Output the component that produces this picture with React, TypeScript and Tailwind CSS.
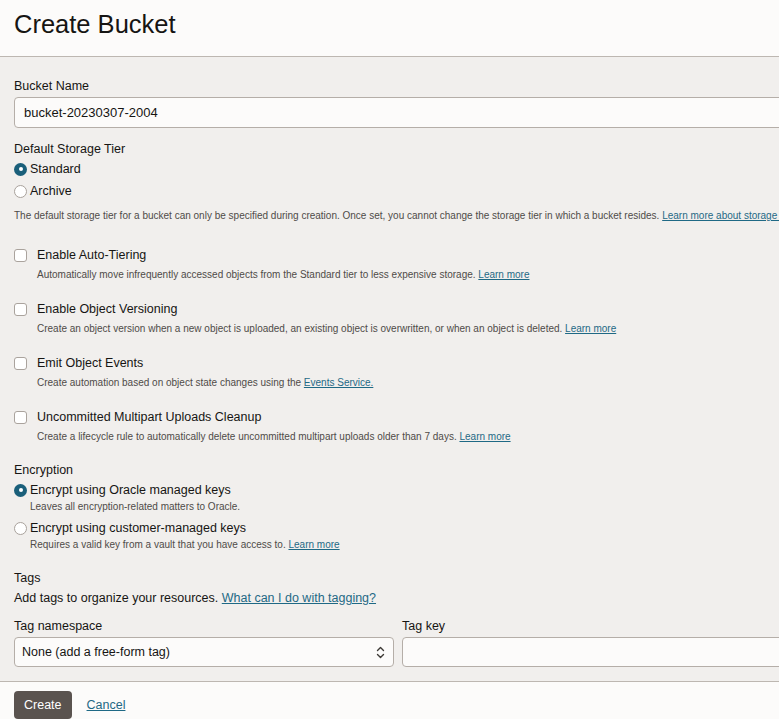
import React from "react";

const font = { fontFamily: '"Liberation Sans", Arial, Helvetica, sans-serif' };

function Radio({ checked }: { checked?: boolean }) {
  return checked ? (
    <span className="inline-flex h-[13px] w-[13px] shrink-0 items-center justify-center rounded-full bg-[#1a5f7a]">
      <span className="h-[4px] w-[4px] rounded-full bg-white" />
    </span>
  ) : (
    <span className="inline-block h-[13px] w-[13px] shrink-0 rounded-full border border-[#a9a29c] bg-white" />
  );
}

function Checkbox() {
  return <span className="inline-block h-[13px] w-[13px] shrink-0 rounded-[3px] border border-[#aaa39d] bg-white" />;
}

function Link({ children }: { children: React.ReactNode }) {
  return <a className="text-[#1f6985] underline underline-offset-[1px]">{children}</a>;
}

function CheckRow({ label, desc, first }: { label: string; desc: React.ReactNode; first?: boolean }) {
  return (
    <div className={first ? "mt-[24px]" : "mt-[19px]"}>
      <div className="flex items-center gap-[10px] leading-[16px] text-[12.5px] text-[#161513]">
        <Checkbox />
        <span>{label}</span>
      </div>
      <div className="mt-[5px] pl-[23px] text-[10px] leading-[14px] text-[#4f4b48] whitespace-nowrap">{desc}</div>
    </div>
  );
}

export default function App() {
  return (
    <div style={font} className="flex h-[719px] w-[779px] flex-col overflow-hidden bg-[#f1efed] text-[#161513]">
      <div className="h-[57px] shrink-0 border-b border-[#bdb7b1] bg-[#fcfbfa] px-[14px] pt-[9px]">
        <h1 className="text-[25.5px] leading-[30px] text-[#161513]">Create Bucket</h1>
      </div>

      <div className="flex-1 overflow-hidden px-[14px] pt-[21px]">
        <div className="text-[12.5px] leading-[16px]">Bucket Name</div>
        <div className="mt-[3px] flex h-[31px] w-[820px] items-center rounded-[4px] border border-[#b5aea8] bg-[#fcfbfa] pl-[9px] text-[13px]">
          bucket-20230307-2004
        </div>

        <div className="mt-[13px] text-[12.5px] leading-[16px]">Default Storage Tier</div>
        <div className="mt-[2px] flex items-center gap-[3px] text-[12.5px] leading-[20px]">
          <Radio checked />
          <span>Standard</span>
        </div>
        <div className="mt-[2px] flex items-center gap-[3px] text-[12.5px] leading-[20px]">
          <Radio />
          <span>Archive</span>
        </div>
        <div className="mt-[8px] whitespace-nowrap text-[10px] leading-[14px] text-[#4f4b48]">
          The default storage tier for a bucket can only be specified during creation. Once set, you cannot change the storage tier in which a bucket resides.{" "}
          <Link>Learn more about storage tiers</Link>
        </div>

        <CheckRow
          first
          label="Enable Auto-Tiering"
          desc={
            <>
              Automatically move infrequently accessed objects from the Standard tier to less expensive storage. <Link>Learn more</Link>
            </>
          }
        />
        <CheckRow
          label="Enable Object Versioning"
          desc={
            <>
              Create an object version when a new object is uploaded, an existing object is overwritten, or when an object is deleted.{" "}
              <Link>Learn more</Link>
            </>
          }
        />
        <CheckRow
          label="Emit Object Events"
          desc={
            <>
              Create automation based on object state changes using the <Link>Events Service.</Link>
            </>
          }
        />
        <CheckRow
          label="Uncommitted Multipart Uploads Cleanup"
          desc={
            <>
              Create a lifecycle rule to automatically delete uncommitted multipart uploads older than 7 days. <Link>Learn more</Link>
            </>
          }
        />

        <div className="mt-[18px] text-[12.5px] leading-[16px]">Encryption</div>
        <div className="mt-[3px] flex items-center gap-[3px] text-[12.5px] leading-[18px]">
          <Radio checked />
          <span>Encrypt using Oracle managed keys</span>
        </div>
        <div className="mt-[1px] pl-[16px] text-[10px] leading-[14px] text-[#4f4b48]">Leaves all encryption-related matters to Oracle.</div>
        <div className="mt-[5px] flex items-center gap-[3px] text-[12.5px] leading-[18px]">
          <Radio />
          <span>Encrypt using customer-managed keys</span>
        </div>
        <div className="mt-[1px] pl-[16px] text-[10px] leading-[14px] text-[#4f4b48]">
          Requires a valid key from a vault that you have access to. <Link>Learn more</Link>
        </div>

        <div className="mt-[18px] text-[12.5px] leading-[16px]">Tags</div>
        <div className="mt-[4px] text-[12.5px] leading-[16px]">
          Add tags to organize your resources. <Link>What can I do with tagging?</Link>
        </div>

        <div className="mt-[12px] flex gap-[8px]">
          <div className="w-[380px] shrink-0">
            <div className="text-[12.5px] leading-[16px]">Tag namespace</div>
            <div className="mt-[3px] flex h-[30px] items-center justify-between rounded-[4px] border border-[#b5aea8] bg-[#fcfbfa] pl-[7px] pr-[8px] text-[12.5px]">
              <span>None (add a free-form tag)</span>
              <svg width="9" height="13" viewBox="0 0 9 13" fill="none" stroke="#3d3935" strokeWidth="1.4" strokeLinecap="round" strokeLinejoin="round">
                <path d="M1.5 4.5 L4.5 1.5 L7.5 4.5" />
                <path d="M1.5 8.5 L4.5 11.5 L7.5 8.5" />
              </svg>
            </div>
          </div>
          <div className="w-[420px] shrink-0">
            <div className="text-[12.5px] leading-[16px]">Tag key</div>
            <div className="mt-[3px] h-[30px] rounded-[4px] border border-[#b5aea8] bg-[#fcfbfa]" />
          </div>
        </div>
      </div>

      <div className="h-[38px] shrink-0 border-t border-[#bdb7b1] bg-[#fcfbfa] px-[14px] pt-[9px]">
        <div className="flex items-center gap-[15px]">
          <button className="h-[28px] rounded-[4px] bg-[#5a534f] px-[10px] text-[12.5px] text-white">Create</button>
          <span className="text-[12.5px] text-[#1f6985] underline">Cancel</span>
        </div>
      </div>
    </div>
  );
}
